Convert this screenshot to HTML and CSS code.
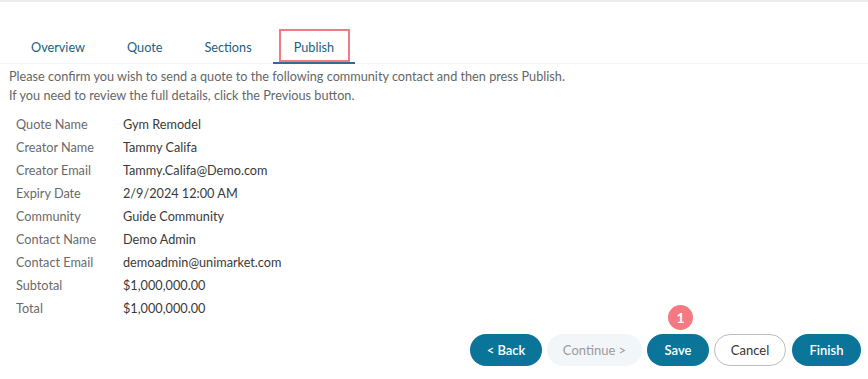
FILE: index.html
```html
<!DOCTYPE html>
<html lang="en">
<head>
  <meta charset="UTF-8">
  <title>Publish Quote</title>
  <link rel="stylesheet" href="styles.css">
</head>
<body>
  <div id="wizard">
    <div id="tabs">
      <div class="tab">Overview</div>
      <div class="tab">Quote</div>
      <div class="tab">Sections</div>
      <div class="tab active">Publish<span class="highlight"></span></div>
    </div>

    <p id="intro">
      Please confirm you wish to send a quote to the following community contact and then press Publish.<br>
      If you need to review the full details, click the Previous button.
    </p>

    <div id="details">
      <div class="label">Quote Name</div><div class="value">Gym Remodel</div>
      <div class="label">Creator Name</div><div class="value">Tammy Califa</div>
      <div class="label">Creator Email</div><div class="value">Tammy.Califa@Demo.com</div>
      <div class="label">Expiry Date</div><div class="value">2/9/2024 12:00 AM</div>
      <div class="label">Community</div><div class="value">Guide Community</div>
      <div class="label">Contact Name</div><div class="value">Demo Admin</div>
      <div class="label">Contact Email</div><div class="value">demoadmin@unimarket.com</div>
      <div class="label">Subtotal</div><div class="value">$1,000,000.00</div>
      <div class="label">Total</div><div class="value">$1,000,000.00</div>
    </div>

    <div id="actions">
      <button class="btn primary back">&lt; Back</button>
      <button class="btn disabled">Continue &gt;</button>
      <button class="btn primary save">Save<span class="badge">1</span></button>
      <button class="btn outline">Cancel</button>
      <button class="btn primary finish">Finish</button>
    </div>
  </div>
</body>
</html>
```

FILE: styles.css
```css
body {
  margin: 0;
  font-family: Lato, "Open Sans", sans-serif;
  font-size: 12.7px;
  color: #555;
  background-color: #fff;
}

#wizard {
  border-top: 2px solid #ececec;
  padding-top: 30px;
}

#tabs {
  display: flex;
  padding-left: 10px;
  border-bottom: 1px solid #f6f6f6;
}

.tab {
  position: relative;
  padding: 7px 21px 7px;
  color: #22607e;
}

.tab.active {
  border-bottom: 2px solid #2f6d90;
  margin-bottom: -1px;
}

.highlight {
  position: absolute;
  left: 6px;
  right: 5px;
  top: -3px;
  bottom: 0;
  border: 2px solid #f47983;
}

#intro {
  margin: 3px 0 0 9px;
  line-height: 19px;
  color: #666;
}

#details {
  display: grid;
  grid-template-columns: 107px auto;
  grid-auto-rows: 23px;
  align-items: center;
  padding-left: 16px;
  margin-top: 7px;
}

.label {
  color: #6a6a6a;
}

.value {
  color: #3a3a3a;
}

#actions {
  display: flex;
  justify-content: flex-end;
  gap: 5px;
  padding-right: 7px;
  margin-top: 15px;
}

.btn {
  position: relative;
  height: 32px;
  padding: 0;
  border-radius: 16px;
  border: 1px solid transparent;
  font-family: inherit;
  font-size: 13px;
  font-weight: 600;
}

.btn.primary {
  background-color: #0a7499;
  color: #fff;
}

.btn.back {
  width: 72px;
}

.btn.save {
  width: 62px;
}

.btn.finish {
  width: 69px;
  margin-left: 1px;
}

.btn.disabled {
  width: 95px;
  background-color: #f2f6f9;
  color: #9a9a9a;
  font-weight: 400;
}

.btn.outline {
  width: 72px;
  background-color: #fff;
  border-color: #bdbdbd;
  color: #333;
  font-weight: 400;
}

.badge {
  position: absolute;
  left: 20px;
  top: -30px;
  width: 25px;
  height: 25px;
  border-radius: 50%;
  background-color: #f47983;
  color: #fff;
  font-size: 14px;
  font-weight: 700;
  line-height: 25px;
  text-align: center;
}
```
